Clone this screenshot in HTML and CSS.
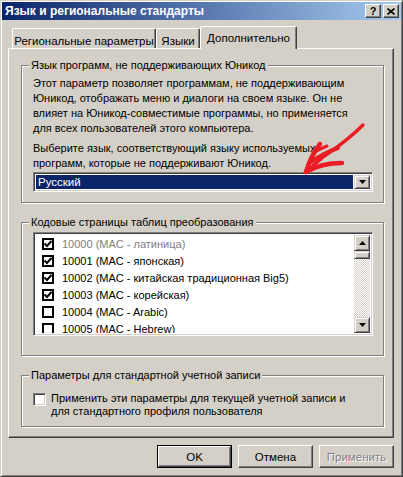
FILE: index.html
```html
<!DOCTYPE html>
<html lang="ru">
<head>
    <meta charset="UTF-8">
    <title>Язык и региональные стандарты</title>
    <link rel="stylesheet" href="styles.css">
</head>
<body>

<div class="window">
    <div class="titlebar">
        <span class="title">Язык и региональные стандарты</span>
        <div class="caption-buttons">
            <span class="cap-btn help">?</span>
            <span class="cap-btn">
                <svg width="8" height="7" viewBox="0 0 8 7"><path d="M0.5,0.5 L7.5,6.5 M7.5,0.5 L0.5,6.5" stroke="#000" stroke-width="1.6"/></svg>
            </span>
        </div>
    </div>

    <div class="client">
        <div class="tabs">
            <div class="tab tab-regional">Региональные параметры</div>
            <div class="tab tab-langs">Языки</div>
            <div class="tab tab-advanced active">Дополнительно</div>
        </div>

        <div class="panel">
            <fieldset class="group">
                <legend>Язык программ, не поддерживающих Юникод</legend>
                <div class="group-body unicode-body">
                    <p class="note">Этот параметр позволяет программам, не поддерживающим<br>Юникод, отображать меню и диалоги на своем языке. Он не<br>влияет на Юникод-совместимые программы, но применяется<br>для всех пользователей этого компьютера.</p>
                    <p class="note">Выберите язык, соответствующий языку используемых<br>программ, которые не поддерживают Юникод.</p>
                    <div class="combo">
                        <span class="combo-value">Русский</span>
                        <span class="raised combo-btn">
                            <svg width="7" height="4" viewBox="0 0 7 4"><path d="M0,0 H7 L3.5,4 Z" fill="#000"/></svg>
                        </span>
                    </div>
                </div>
            </fieldset>

            <fieldset class="group">
                <legend>Кодовые страницы таблиц преобразования</legend>
                <div class="group-body codepage-body">
                    <div class="listbox">
                        <div class="list-items" id="codepages"></div>
                        <div class="scrollbar">
                            <span class="raised sb-btn">
                                <svg width="7" height="4" viewBox="0 0 7 4"><path d="M0,4 H7 L3.5,0 Z" fill="#000"/></svg>
                            </span>
                            <span class="raised sb-thumb"></span>
                            <span class="sb-track"></span>
                            <span class="raised sb-btn">
                                <svg width="7" height="4" viewBox="0 0 7 4"><path d="M0,0 H7 L3.5,4 Z" fill="#000"/></svg>
                            </span>
                        </div>
                    </div>
                </div>
            </fieldset>

            <fieldset class="group">
                <legend>Параметры для стандартной учетной записи</legend>
                <div class="group-body account-body">
                    <label class="account-row">
                        <span class="checkbox"></span>
                        <span>Применить эти параметры для текущей учетной записи и<br>для стандартного профиля пользователя</span>
                    </label>
                </div>
            </fieldset>
        </div>

        <div class="buttons">
            <span class="btn default"><span>OK</span></span>
            <span class="btn">Отмена</span>
            <span class="btn disabled">Применить</span>
        </div>
    </div>
</div>

<!-- красная стрелка поверх диалога -->
<svg class="arrow" width="403" height="477" viewBox="0 0 403 477">
    <g fill="none" stroke="#ec1c24" stroke-linecap="round" stroke-linejoin="round">
        <path d="M363,125 C352,136 338,147 323,157 L306,172" stroke-width="3.5"/>
        <path d="M306,172 C309,162 313,153 320,144" stroke-width="4.5"/>
        <path d="M306,172 C316,166 328,163 342,163" stroke-width="4.5"/>
        <path d="M311,162 C320,156 329,151 338,148" stroke-width="4"/>
        <path d="M313,153 C318,150 322,148 327,146" stroke-width="3"/>
    </g>
</svg>

<script>
    // Список кодовых страниц
    const pages = [
        { name: "10000 (MAC - латиница)", on: true, grey: true },
        { name: "10001 (MAC - японская)", on: true },
        { name: "10002 (MAC - китайская традиционная Big5)", on: true },
        { name: "10003 (MAC - корейская)", on: true },
        { name: "10004 (MAC - Arabic)", on: false },
        { name: "10005 (MAC - Hebrew)", on: false }
    ];

    const list = document.getElementById("codepages");
    const tick = '<svg width="8" height="8" viewBox="0 0 8 8"><path d="M0.5,3.5 L3,6 L7.5,1" fill="none" stroke="#000" stroke-width="2"/></svg>';

    for (let p of pages) {
        list.innerHTML += `<div class="list-item${p.grey ? " grey" : ""}">
            <span class="list-check">${p.on ? tick : ""}</span>
            <span>${p.name}</span>
        </div>`;
    }
</script>
</body>
</html>
```

FILE: styles.css
```css
* { box-sizing: border-box; }
html, body { margin: 0; }
body { width: 403px; height: 477px; overflow: hidden; position: relative; background: #d4d0c8; font-family: "Liberation Sans", Arial, sans-serif; font-size: 11px; color: #000; white-space: nowrap; }

/* окно */
.window { width: 403px; height: 477px; padding: 1px; border: 1px solid; border-color: #d4d0c8 #404040 #404040 #d4d0c8; box-shadow: inset 1px 1px #fff, inset -1px -1px #808080; }
.titlebar { height: 18px; display: flex; align-items: center; justify-content: space-between; padding: 0 2px 0 3px; background: linear-gradient(to right, #0a246a, #a6caf0); color: #fff; }
.title { font-weight: bold; font-size: 12px; }
.caption-buttons { display: flex; gap: 2px; }
.cap-btn { width: 16px; height: 14px; display: flex; align-items: center; justify-content: center; background: #d4d0c8; color: #000; font-weight: bold; font-size: 11px; border: 1px solid; border-color: #fff #404040 #404040 #fff; box-shadow: inset -1px -1px #808080; }

.raised { background: #d4d0c8; border: 1px solid; border-color: #d4d0c8 #404040 #404040 #d4d0c8; box-shadow: inset 1px 1px #fff, inset -1px -1px #808080; }

/* вкладки */
.client { padding: 6px 7px 0 6px; }
.tabs { display: flex; align-items: flex-end; height: 22px; padding-left: 4px; font-size: 11.5px; }
.tab { height: 20px; display: flex; align-items: center; justify-content: center; padding-top: 4px; border: 1px solid; border-bottom: none; border-color: #fff #404040 transparent #fff; box-shadow: inset -1px 0 #808080; border-radius: 2px 2px 0 0; }
.tab-regional { width: 144px; }
.tab-langs { width: 44px; }
.tab-advanced { width: 97px; }
.tab.active { height: 23px; margin-bottom: -1px; padding: 0 0 1px; background: #d4d0c8; position: relative; z-index: 1; }

.panel { height: 390px; display: flex; flex-direction: column; padding: 9px 9px 0 12px; border: 1px solid; border-color: #fff #404040 #404040 #fff; box-shadow: inset -1px -1px #808080; }
.panel .group + .group { margin-top: 12px; }

/* группы */
.group { margin: 0; padding: 0; min-width: 0; border: 1px solid #808080; box-shadow: inset 1px 1px #fff, 1px 1px #fff; }
.group legend { margin-left: 7px; padding: 0 2px; line-height: 15px; background: #d4d0c8; }
.group-body { padding: 3px 10px 10px 11px; }
.note { margin: 0; line-height: 15px; }
.note + .note { margin-top: 5px; }

.combo { height: 20px; margin-top: 1px; display: flex; background: #fff; border: 1px solid; border-color: #808080 #fff #fff #808080; box-shadow: inset 1px 1px #404040, inset -1px -1px #d4d0c8; padding: 2px; }
.combo-value { flex: 1; background: #0a246a; color: #fff; line-height: 14px; padding-left: 2px; margin-right: 1px; font-size: 11.5px; }
.combo-btn { width: 16px; display: flex; align-items: center; justify-content: center; }

/* список кодовых страниц */
.codepage-body { padding-top: 2px; padding-bottom: 19px; }
.listbox { height: 104px; display: flex; background: #fff; border: 1px solid; border-color: #808080 #fff #fff #808080; box-shadow: inset 1px 1px #404040, inset -1px -1px #d4d0c8; padding: 2px; }
.list-items { flex: 1; overflow: hidden; padding: 0 0 0 6px; }
.list-item { height: 17px; display: flex; align-items: center; gap: 8px; }
.list-item.grey { color: #808080; }
.list-check { width: 12px; height: 12px; flex: none; border: 2px solid #000; display: flex; align-items: center; justify-content: center; background: #fff; }
.scrollbar { width: 16px; display: flex; flex-direction: column; background: repeating-conic-gradient(#fff 0 25%, #d4d0c8 0 50%) 0 0 / 2px 2px; }
.sb-btn { height: 16px; display: flex; align-items: center; justify-content: center; }
.sb-thumb { height: 8px; }
.sb-track { flex: 1; }

.account-body { padding-top: 9px; padding-bottom: 8px; }
.account-row { display: flex; gap: 5px; line-height: 13px; }
.checkbox { width: 13px; height: 13px; flex: none; margin-top: 1px; background: #fff; border: 1px solid; border-color: #808080 #fff #fff #808080; box-shadow: inset 1px 1px #404040, inset -1px -1px #d4d0c8; }

/* кнопки */
.buttons { display: flex; justify-content: flex-end; gap: 6px; margin-top: 7px; font-size: 11.5px; }
.btn { width: 75px; height: 23px; display: flex; align-items: center; justify-content: center; background: #d4d0c8; border: 1px solid; border-color: #fff #404040 #404040 #fff; box-shadow: inset -1px -1px #808080; }
.btn.default { border: 1px solid #000; box-shadow: none; padding: 0; }
.btn.default span { width: 100%; height: 100%; display: flex; align-items: center; justify-content: center; border: 1px solid; border-color: #fff #404040 #404040 #fff; box-shadow: inset -1px -1px #808080; }
.btn.disabled { color: #808080; text-shadow: 1px 1px #fff; }

.arrow { position: absolute; left: 0; top: 0; pointer-events: none; }
```
